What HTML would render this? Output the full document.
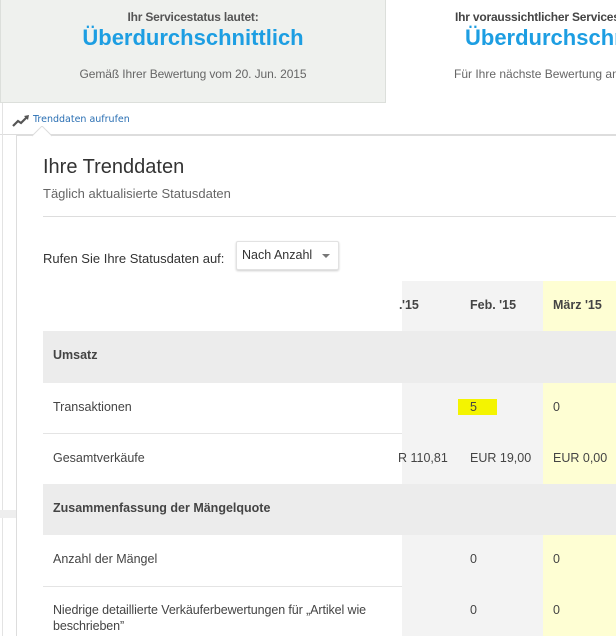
<!DOCTYPE html>
<html><head><meta charset="utf-8"><style>
*{margin:0;padding:0;box-sizing:border-box}
html,body{width:616px;height:636px;overflow:hidden;background:#fff}
body{font-family:"Liberation Sans",Arial,sans-serif;color:#333}
#w{position:relative;width:616px;height:636px;overflow:hidden}
.a{position:absolute;white-space:nowrap}
</style></head><body><div id="w">
<div class="a" style="left:0;top:0;width:386px;height:103px;background:#eff1ee;border:1px solid #dcdfdb;border-top:none"></div>
<div class="a" style="left:0;width:386px;top:10px;text-align:center;font-size:12px;font-weight:bold;color:#555;letter-spacing:-0.2px">Ihr Servicestatus lautet:</div>
<div class="a" style="left:0;width:386px;top:25px;text-align:center;font-size:22px;font-weight:bold;color:#1d9ee2">Überdurchschnittlich</div>
<div class="a" style="left:0;width:386px;top:67px;text-align:center;font-size:12px;color:#666;letter-spacing:-0.1px">Gemäß Ihrer Bewertung vom 20. Jun. 2015</div>
<div class="a" style="left:455px;top:10px;width:161px;overflow:hidden;font-size:12px;font-weight:bold;color:#444;letter-spacing:-0.2px">Ihr voraussichtlicher Servicestatus</div>
<div class="a" style="left:465px;top:25px;width:151px;overflow:hidden;font-size:22px;font-weight:bold;color:#1d9ee2">Überdurchschnittlich</div>
<div class="a" style="left:454px;top:67px;width:162px;overflow:hidden;font-size:12px;color:#666">Für Ihre nächste Bewertung am</div>
<div class="a" style="left:0;top:134px;width:616px;height:1px;background:#ddd"></div>
<div class="a" style="left:2px;top:103px;width:1px;height:533px;background:#e3e3e3"></div>
<div class="a" style="left:0;top:510px;width:16px;height:8px;background:#eee"></div>
<svg class="a" style="left:11px;top:114px" width="20" height="14" viewBox="0 0 20 14"><path d="M2 12 L7 7 L10 9 L16 3" fill="none" stroke="#555" stroke-width="2.2"/><path d="M13 2 L18 1 L17 6 Z" fill="#555"/></svg>
<div class="a" style="left:33px;top:114px;font-family:'DejaVu Sans',sans-serif;font-size:9.5px;color:#2a6fb3">Trenddaten aufrufen</div>
<div class="a" style="left:16px;top:135px;width:600px;height:501px;border-left:1px solid #ddd;border-top:1px solid #ddd"></div>
<svg class="a" style="left:32px;top:126px" width="20" height="11"><path d="M0 10 L10 0 L20 10" fill="#fff" stroke="#ddd"/></svg>
<div class="a" style="left:43px;top:156px;font-size:20px;color:#333">Ihre Trenddaten</div>
<div class="a" style="left:43px;top:186px;font-size:13px;color:#666">Täglich aktualisierte Statusdaten</div>
<div class="a" style="left:43px;top:216px;width:573px;height:1px;background:#ddd"></div>
<div class="a" style="left:43px;top:251px;font-size:13px;color:#333">Rufen Sie Ihre Statusdaten auf:</div>
<div class="a" style="left:236px;top:241px;width:103px;height:29px;border:1px solid #e2e2e2;border-radius:2px;box-shadow:0 1px 2px rgba(0,0,0,.2);background:#fff"></div>
<div class="a" style="left:242px;top:248px;font-size:12.5px;color:#333">Nach Anzahl</div>
<svg class="a" style="left:322px;top:254px" width="9" height="5"><path d="M0 0 L8 0 L4 4Z" fill="#777"/></svg>
<div class="a" style="left:402px;top:281px;width:141px;height:355px;background:#f3f3f3"></div>
<div class="a" style="left:543px;top:281px;width:73px;height:355px;background:#fefed3"></div>
<div class="a" style="left:43px;top:331px;width:573px;height:52px;background:#ececec"></div>
<div class="a" style="left:43px;top:484px;width:573px;height:51px;background:#ececec"></div>
<div class="a" style="left:43px;top:433px;width:359px;height:1px;background:#e4e4e4"></div>
<div class="a" style="left:43px;top:586px;width:359px;height:1px;background:#e4e4e4"></div>
<div class="a" style="left:402px;top:298px;font-size:12.5px;font-weight:bold;color:#444">'15</div>
<div class="a" style="left:399px;top:298px;font-size:12.5px;font-weight:bold;color:#444">.</div>
<div class="a" style="left:470px;top:298px;font-size:12.5px;font-weight:bold;color:#444">Feb. '15</div>
<div class="a" style="left:553px;top:298px;width:63px;overflow:hidden;font-size:12.5px;font-weight:bold;color:#444">März '15</div>
<div class="a" style="left:53px;top:348px;font-size:12.5px;font-weight:bold;color:#444">Umsatz</div>
<div class="a" style="left:53px;top:400px;font-size:12.5px;color:#444">Transaktionen</div>
<div class="a" style="left:458px;top:399px;width:39px;height:16px;background:#f4f400"></div>
<div class="a" style="left:470px;top:400px;font-size:12.5px;color:#444">5</div>
<div class="a" style="left:553px;top:400px;font-size:12.5px;color:#444">0</div>
<div class="a" style="left:53px;top:451px;font-size:12.5px;color:#444">Gesamtverkäufe</div>
<div class="a" style="left:398px;top:451px;font-size:12.5px;color:#444">R 110,81</div>
<div class="a" style="left:470px;top:451px;font-size:12.5px;color:#444">EUR 19,00</div>
<div class="a" style="left:553px;top:451px;width:63px;overflow:hidden;font-size:12.5px;color:#444">EUR 0,00</div>
<div class="a" style="left:53px;top:501px;font-size:12.5px;font-weight:bold;color:#444">Zusammenfassung der Mängelquote</div>
<div class="a" style="left:53px;top:552px;font-size:12.5px;color:#444">Anzahl der Mängel</div>
<div class="a" style="left:470px;top:552px;font-size:12.5px;color:#444">0</div>
<div class="a" style="left:553px;top:552px;font-size:12.5px;color:#444">0</div>
<div class="a" style="left:53px;top:602px;font-size:12.5px;color:#444;line-height:16px;letter-spacing:-0.1px">Niedrige detaillierte Verkäuferbewertungen für „Artikel wie<br>beschrieben”</div>
<div class="a" style="left:470px;top:603px;font-size:12.5px;color:#444">0</div>
<div class="a" style="left:553px;top:603px;font-size:12.5px;color:#444">0</div>
</div></body></html>
